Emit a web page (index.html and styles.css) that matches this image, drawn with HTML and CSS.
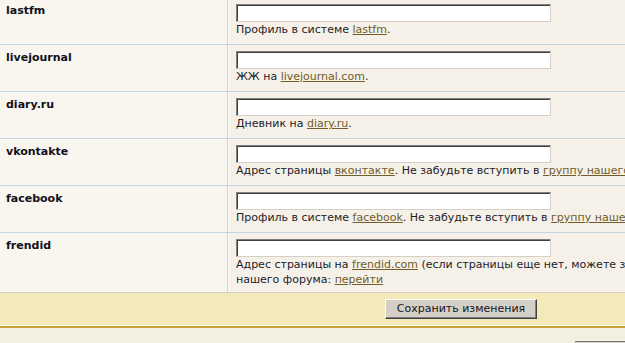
FILE: index.html
```html
<!DOCTYPE html>
<html lang="ru">
<head>
<meta charset="utf-8">
<title>Профиль</title>
<link rel="stylesheet" href="styles.css">
</head>
<body>
<div class="page">
  <form class="form">
    <div class="row first">
      <div class="label">lastfm</div>
      <div class="field">
        <input class="text-input" type="text">
        <div class="hint">Профиль в системе <a href="#">lastfm</a>.</div>
      </div>
    </div>
    <div class="row">
      <div class="label">livejournal</div>
      <div class="field">
        <input class="text-input" type="text">
        <div class="hint">ЖЖ на <a href="#">livejournal.com</a>.</div>
      </div>
    </div>
    <div class="row">
      <div class="label">diary.ru</div>
      <div class="field">
        <input class="text-input" type="text">
        <div class="hint">Дневник на <a href="#">diary.ru</a>.</div>
      </div>
    </div>
    <div class="row">
      <div class="label">vkontakte</div>
      <div class="field">
        <input class="text-input" type="text">
        <div class="hint">Адрес страницы <a href="#">вконтакте</a>. Не забудьте вступить в <a href="#">группу нашего форума</a>.</div>
      </div>
    </div>
    <div class="row">
      <div class="label">facebook</div>
      <div class="field">
        <input class="text-input" type="text">
        <div class="hint">Профиль в системе <a href="#">facebook</a>. Не забудьте вступить в <a href="#">группу нашего форума</a>.</div>
      </div>
    </div>
    <div class="row last">
      <div class="label">frendid</div>
      <div class="field">
        <input class="text-input" type="text">
        <div class="hint">Адрес страницы на <a href="#">frendid.com</a> (если страницы еще нет, можете зарегистрироваться) и вступить в группу<br>нашего форума: <a href="#">перейти</a></div>
      </div>
    </div>
    <div class="actions">
      <button class="btn" type="button">Сохранить изменения</button>
    </div>
  </form>
  <div class="below">
    <div class="below-box"></div>
  </div>
</div>
</body>
</html>
```
FILE: styles.css
```css
html, body {
  margin: 0;
  padding: 0;
  background: #f3efe1;
  overflow: hidden;
}
body {
  font-family: "DejaVu Sans", Verdana, sans-serif;
  font-size: 11px;
  color: #1c1c2c;
}
.page {
  width: 922px;
}
.form {
  margin: 0;
}
.row {
  display: grid;
  grid-template-columns: 228px 1fr;
  border-bottom: 1px solid #c5d5e2;
}
.row.last {
  border-bottom-color: #d6cfb9;
}
.label {
  background: #f9f6f0;
  border-right: 1px solid #c5d5e2;
  padding: 6px 6px 0;
  font-weight: bold;
  color: #111118;
  line-height: 13px;
}
.field {
  background: #f5f1e8;
  border-left: 2px solid #faf8f3;
  padding: 6px 6px 7px;
}
.row.first .label,
.row.first .field {
  padding-top: 4px;
}
.row.last .field {
  padding-bottom: 5px;
}
.text-input {
  display: block;
  box-sizing: border-box;
  width: 315px;
  height: 18px;
  margin: 0;
  padding: 0 2px;
  background: #fff;
  border: 1px solid;
  border-color: #7f7f7f #d4d0c8 #d4d0c8 #7f7f7f;
  box-shadow: inset 1px 1px 0 #404040, inset -1px -1px 0 #ffffff;
  font-family: inherit;
  font-size: 11px;
  outline: none;
}
.hint {
  line-height: 15px;
  white-space: nowrap;
}
.hint a {
  color: #725c2a;
  text-decoration: underline;
}
.actions {
  background: #f4e9b9;
  display: flex;
  justify-content: center;
  padding: 6px 0 6px;
  border-bottom: 1px solid #fbf8ec;
}
.btn {
  box-sizing: border-box;
  width: 152px;
  height: 20px;
  margin: 0;
  padding: 0;
  background: #d4d0c8;
  border: 1px solid;
  border-color: #ffffff #404040 #404040 #ffffff;
  box-shadow: inset -1px -1px 0 #808080;
  font-family: inherit;
  font-size: 11px;
  color: #141420;
  line-height: 18px;
}
.below {
  border-top: 2px solid #c9a236;
  height: 40px;
  display: flex;
  justify-content: flex-start;
  padding-left: 575px;
  padding-top: 13px;
}
.below-box {
  width: 120px;
  height: 10px;
  border-top: 1px solid #7a7a7a;
  background: #d4d0c8;
}
```
